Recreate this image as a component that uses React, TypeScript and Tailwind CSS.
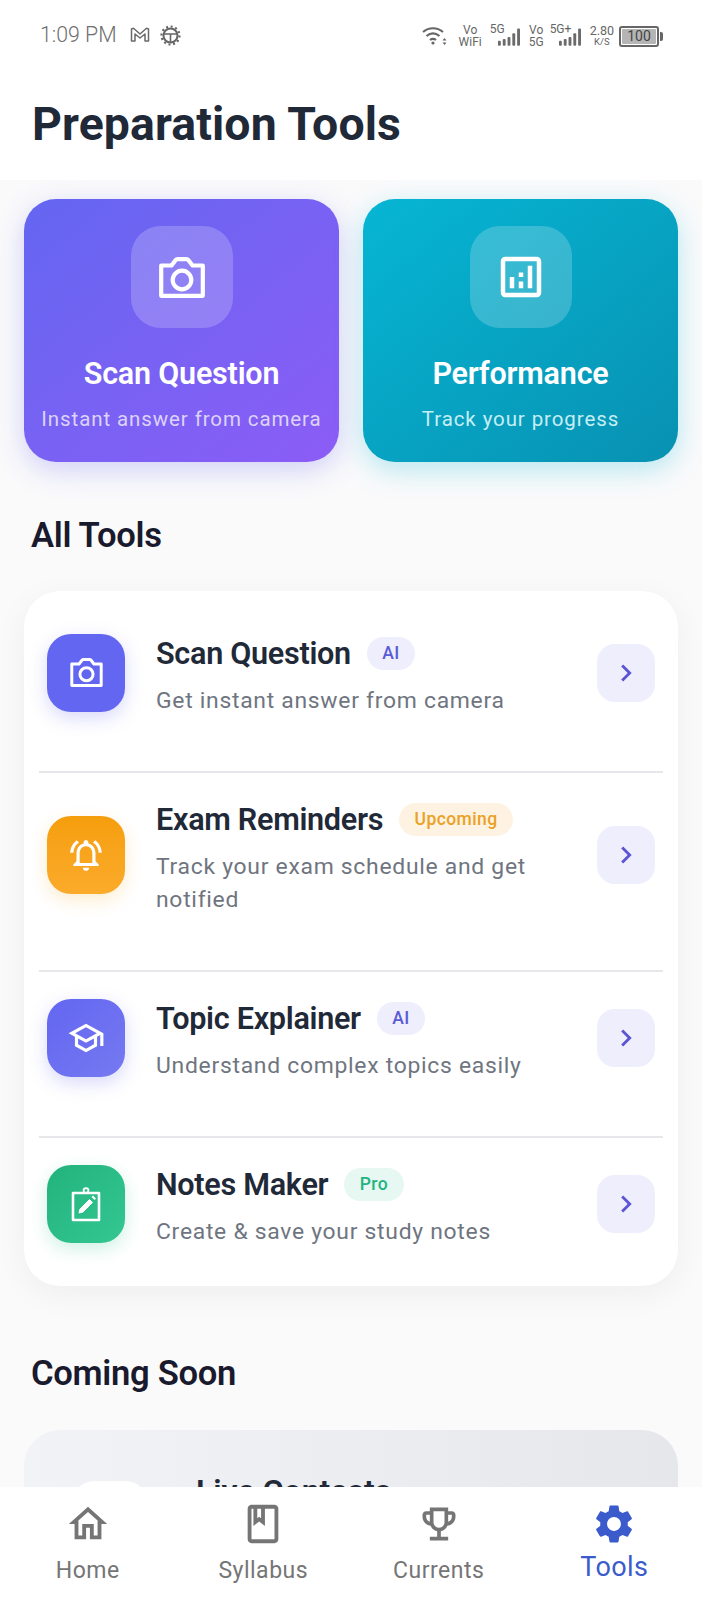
import React from "react";
import {
  MdOutlineAnalytics,
  MdOutlineNotificationsActive,
  MdOutlineSchool,
  MdOutlineHome,
  MdOutlineBook,
  MdOutlineEmojiEvents,
  MdSettings,
  MdChevronRight,
} from "react-icons/md";

function Camera({ w, h }: { w: number; h: number }) {
  return (
    <svg width={w} height={h} viewBox="0 0 46 41" fill="none" stroke="white" strokeWidth="4.2" strokeLinejoin="round">
      <path d="M2.2 8.5H12.5L16.5 3.2Q17.4 2.2 18.6 2.2H27.4Q28.6 2.2 29.5 3.2L33.5 8.5H43.8V38.8H2.2Z" />
      <circle cx="23" cy="23" r="9.3" />
    </svg>
  );
}

function NoteIcon() {
  return (
    <svg width="34" height="36" viewBox="0 0 34 36" fill="none" stroke="white" strokeWidth="2.6">
      <path d="M4 7h26v27H4z" strokeLinejoin="round" />
      <circle cx="17" cy="4.5" r="2.4" strokeWidth="1.8" />
      <path d="M10 27l1-4 9.5-9.5 3 3L14 26z" fill="white" strokeWidth="1" />
      <path d="M22.5 11l1.5-1.5 3 3-1.5 1.5z" fill="white" stroke="none" />
    </svg>
  );
}

function Signal() {
  return (
    <svg width="23" height="20" viewBox="0 0 24 20" fill="#6b6b6b">
      <rect x="1" y="14" width="3" height="5" rx="1" />
      <rect x="6" y="12" width="3" height="7" rx="1" />
      <rect x="11" y="10" width="3" height="9" rx="1" />
      <rect x="16" y="6" width="3" height="13" rx="1" />
      <rect x="21" y="1" width="3" height="18" rx="1" />
    </svg>
  );
}

function Stacked({ a, b, className = "" }: { a: string; b: string; className?: string }) {
  return (
    <div className={`flex flex-col items-center text-[12px] leading-[12px] text-[#666] ${className}`}>
      <span>{a}</span>
      <span>{b}</span>
    </div>
  );
}

function StatusBar() {
  return (
    <div className="flex h-[72px] items-start justify-between pl-[40px] pr-[39px] pt-[23px] text-[#6f6f6f]">
      <div className="flex items-center gap-[13px]">
        <span className="text-[21.3px] leading-[24px] font-light">1:09 PM</span>
        <svg width="20" height="16" viewBox="0 0 20 16" fill="none" stroke="#6a6a6a" strokeWidth="1.5" strokeLinejoin="round">
          <path d="M1.5 2v12h3.5V7l5 4 5-4v7h3.5V2l-2-.7L10 7 3.5 1.3z" />
        </svg>
        <svg width="21" height="21" viewBox="0 0 21 21" fill="none" stroke="#666" className="-ml-[3px]">
          <circle cx="10.5" cy="10.5" r="7" strokeWidth="2" />
          <circle cx="10.5" cy="10.5" r="9" strokeWidth="2.2" strokeDasharray="2 2.7" />
          <path d="M4 9h13M10.5 9v8" strokeWidth="1.6" />
        </svg>
      </div>
      <div className="flex items-center pt-[1px]">
        <svg width="26" height="22" viewBox="0 0 26 22" fill="none" stroke="#666" strokeWidth="2.2">
          <path d="M1 7c6-5 14-5 20 0M4.5 11c4-3.3 9-3.3 13 0M8 15c2-1.6 4-1.6 6 0" />
          <circle cx="11" cy="18" r="1.6" fill="#666" stroke="none" />
          <path d="M22.5 13l2 2.5h-4zM22.5 20l2-2.5h-4z" fill="#666" stroke="none" />
        </svg>
        <Stacked a="Vo" b="WiFi" className="ml-[11px]" />
        <div className="relative ml-[8px] h-[24px] w-[30px]">
          <span className="absolute -top-[1px] left-0 text-[12px] leading-[12px] text-[#666]">5G</span>
          <div className="absolute right-0 top-[3px]"><Signal /></div>
        </div>
        <Stacked a="Vo" b="5G" className="ml-[9px]" />
        <div className="relative ml-[6px] h-[24px] w-[31px]">
          <span className="absolute -top-[1px] left-0 text-[12px] leading-[12px] text-[#666]">5G+</span>
          <div className="absolute right-0 top-[3px]"><Signal /></div>
        </div>
        <div className="ml-[9px] flex flex-col items-center text-[#666]">
          <span className="text-[12.5px] leading-[12px]">2.80</span>
          <span className="text-[9.5px] leading-[10px]">K/S</span>
        </div>
        <div className="ml-[5px] flex items-center">
          <div className="flex h-[21px] w-[40px] items-center justify-center rounded-[3px] border-2 border-[#666] p-[1px]">
            <div className="flex h-full w-full items-center justify-center rounded-[1px] bg-[#b5b5b5] text-[14px] leading-none text-[#444]">100</div>
          </div>
          <div className="ml-[1px] h-[9px] w-[3px] rounded-r-[2px] bg-[#666]" />
        </div>
      </div>
    </div>
  );
}

function HeroCard({ icon, title, sub, grad, shadow, subColor, iconBg }: { icon: React.ReactNode; title: string; sub: string; grad: string; shadow: string; subColor: string; iconBg: string }) {
  return (
    <div className={`flex h-[263px] min-w-0 flex-1 flex-col items-center rounded-[32px] pt-[27px] ${grad} ${shadow}`}>
      <div className={`flex h-[102px] w-[102px] items-center justify-center rounded-[30px] ${iconBg}`}>{icon}</div>
      <div className="mt-[27px] text-[30.5px] leading-[38px] font-semibold tracking-[-0.2px] text-white">{title}</div>
      <div className={`mt-[12px] text-[20.5px] leading-[28px] tracking-[0.9px] whitespace-nowrap ${subColor}`}>{sub}</div>
    </div>
  );
}

function Badge({ label, cls }: { label: string; cls: string }) {
  return <span className={`ml-[16px] inline-flex h-[33px] items-center rounded-full px-[15.5px] text-[17.5px] font-medium tracking-[0.4px] ${cls}`}>{label}</span>;
}

function Row({ icon, iconCls, title, badge, badgeCls, sub, height, border = true }: { icon: React.ReactNode; iconCls: string; title: string; badge: string; badgeCls: string; sub: React.ReactNode; height: string; border?: boolean }) {
  return (
    <div className={`mx-[15px] px-[8px] pt-[21.5px] ${height} ${border ? "border-b-[2px] border-[#e5e7eb]" : ""}`}>
      <div className="flex items-center">
        <div className={`flex h-[78px] w-[78px] shrink-0 items-center justify-center rounded-[24px] ${iconCls}`}>{icon}</div>
        <div className="ml-[31px] min-w-0 flex-1 pt-[5px]">
          <div className="flex h-[40px] items-center">
            <span className="text-[30.6px] leading-[38px] font-semibold tracking-[-0.3px] text-[#1f2937]">{title}</span>
            <Badge label={badge} cls={badgeCls} />
          </div>
          <div className="mt-[10.5px] text-[22.9px] leading-[33px] tracking-[0.72px] text-[#6f7580]">{sub}</div>
        </div>
        <div className="flex h-[58px] w-[58px] shrink-0 items-center justify-center rounded-[18px] bg-[#efeefc]">
          <MdChevronRight size={34} color="#5b55d6" />
        </div>
      </div>
    </div>
  );
}

function NavItem({ icon, label, active = false }: { icon: React.ReactNode; label: string; active?: boolean }) {
  return (
    <div className="flex flex-1 flex-col items-center pt-[15px]">
      <div className="flex h-[44px] items-center justify-center">{icon}</div>
      <div className={active ? "mt-[4px] text-[27px] leading-[34px] tracking-[0.4px] text-[#3b5bcc]" : "mt-[8px] text-[23px] leading-[34px] tracking-[0.5px] text-[#757575]"}>{label}</div>
    </div>
  );
}

export default function App() {
  return (
    <div className="flex h-[1600px] w-[702px] flex-col overflow-hidden bg-[#fafafb] font-['Roboto',sans-serif]">
      <div className="bg-white h-[180px] shrink-0">
        <StatusBar />
        <div className="pl-[32px] pt-[24px] text-[46.4px] leading-[56px] font-bold tracking-[0.1px] text-[#1f2937]">Preparation Tools</div>
      </div>
      <div className="min-h-0 flex-1 overflow-hidden px-[24px] pt-[19px]">
        <div className="flex gap-[24px]">
          <HeroCard
            icon={<Camera w={46} h={41} />}
            title="Scan Question"
            sub="Instant answer from camera"
            grad="bg-linear-to-br from-[#6366f1] to-[#8b5cf6]"
            shadow="shadow-[0_8px_28px_rgba(99,102,241,0.28)]"
            subColor="text-[#dcd3fb]"
            iconBg="bg-white/20"
          />
          <HeroCard
            icon={<MdOutlineAnalytics size={54} color="white" />}
            title="Performance"
            sub="Track your progress"
            grad="bg-linear-to-br from-[#06b6d4] to-[#0891b2]"
            shadow="shadow-[0_8px_28px_rgba(6,182,212,0.28)]"
            subColor="text-[#c5eef5]"
            iconBg="bg-white/20"
          />
        </div>
        <div className="mt-[51px] pl-[7px] text-[34.6px] leading-[44px] font-semibold tracking-[-0.3px] text-[#1a1a2e]">All Tools</div>
        <div className="mt-[34px] rounded-[36px] bg-white pt-[16px] shadow-[0_8px_32px_rgba(0,0,0,0.05)]">
          <Row
            icon={<Camera w={33} h={29} />}
            iconCls="bg-[#6366f1] shadow-[0_6px_18px_rgba(99,102,241,0.25)]"
            title="Scan Question"
            badge="AI"
            badgeCls="bg-[#eeeefd] text-[#5b5bd6]"
            sub="Get instant answer from camera"
            height="h-[166px]"
          />
          <Row
            icon={<MdOutlineNotificationsActive size={38} color="white" />}
            iconCls="bg-[#f59e0b] bg-linear-to-b from-[#f59e0b] to-[#fbab2a] shadow-[0_6px_18px_rgba(245,158,11,0.2)]"
            title="Exam Reminders"
            badge="Upcoming"
            badgeCls="bg-[#fef3e2] text-[#eba125]"
            sub={<>Track your exam schedule and get<br />notified</>}
            height="h-[199px]"
          />
          <Row
            icon={<MdOutlineSchool size={38} color="white" />}
            iconCls="bg-linear-to-br from-[#6366f1] to-[#7679f0] shadow-[0_6px_18px_rgba(99,102,241,0.25)]"
            title="Topic Explainer"
            badge="AI"
            badgeCls="bg-[#eeeefd] text-[#5b5bd6]"
            sub="Understand complex topics easily"
            height="h-[166px]"
          />
          <Row
            icon={<NoteIcon />}
            iconCls="bg-linear-to-br from-[#22b37d] to-[#34c792] shadow-[0_6px_18px_rgba(16,185,129,0.2)]"
            title="Notes Maker"
            badge="Pro"
            badgeCls="bg-[#e6f8f1] text-[#1fb37f]"
            sub="Create & save your study notes"
            height="h-[148px]"
            border={false}
          />
        </div>
        <div className="mt-[65px] pl-[7px] text-[34.6px] leading-[44px] font-semibold tracking-[-0.3px] text-[#1a1a2e]">Coming Soon</div>
        <div className="mt-[35px] flex h-[200px] items-start rounded-t-[36px] bg-linear-to-r from-[#f1f3f6] to-[#e5e7eb] pl-[47px] pt-[51px]">
          <div className="h-[80px] w-[78px] rounded-[24px] bg-white" />
          <div className="ml-[47px] -mt-[9px] text-[32px] leading-[38px] font-semibold text-[#1f2937]">Live Contests</div>
        </div>
      </div>
      <div className="flex h-[113px] shrink-0 bg-white">
        <NavItem icon={<MdOutlineHome size={46} color="#757575" />} label="Home" />
        <NavItem icon={<MdOutlineBook size={46} color="#757575" />} label="Syllabus" />
        <NavItem icon={<MdOutlineEmojiEvents size={44} color="#757575" />} label="Currents" />
        <NavItem icon={<MdSettings size={46} color="#3b5bcc" />} label="Tools" active />
      </div>
    </div>
  );
}
